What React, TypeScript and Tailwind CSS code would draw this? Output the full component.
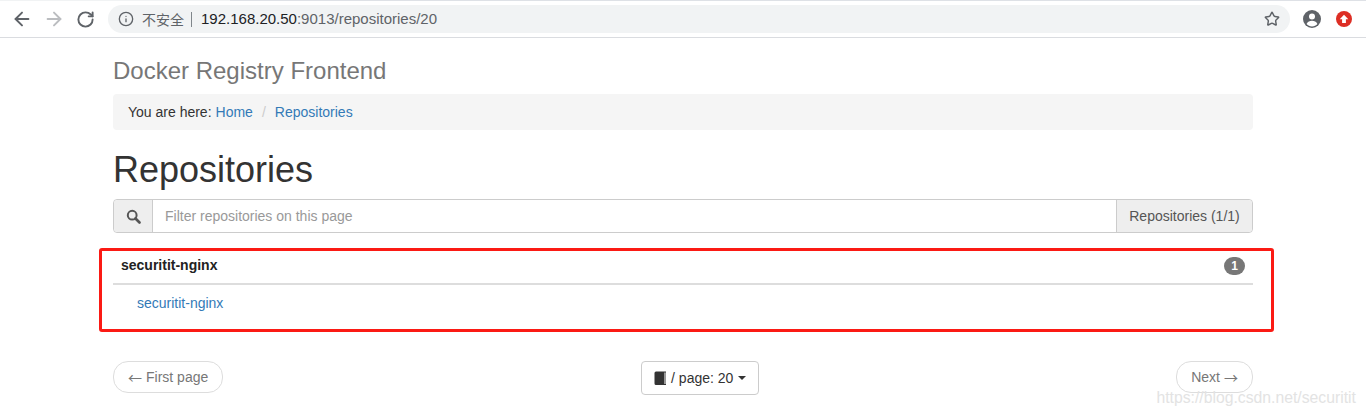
import { ArrowLeft, ArrowRight, RotateCw, Info, Star } from "lucide-react"

function Toolbar() {
  return (
    <div className="h-[38px] flex flex-col border-b border-[#dadce0] bg-white">
      <div className="h-px flex shrink-0">
        <div className="w-[230px] bg-[#f1f3f4]" />
        <div className="flex-1 bg-[#dee1e6]" />
      </div>
      <div className="flex-1 flex items-center pl-[11px]">
        <ArrowLeft size={22} strokeWidth={2.1} className="text-[#5f6368]" />
        <ArrowRight size={22} strokeWidth={2.1} className="ml-[10px] text-[#bbbdc0]" />
        <RotateCw size={19} strokeWidth={2.4} className="ml-[11px] text-[#5f6368]" />
        <div className="ml-[13px] h-[28px] w-[1182px] rounded-full bg-[#f1f3f4] flex items-center pl-[10px] pr-[10px]">
          <Info size={16} strokeWidth={2} className="text-[#5f6368]" />
          <span className="ml-2 text-[14px] text-[#5f6368] font-['Noto_Sans_CJK_SC',sans-serif] leading-none">不安全</span>
          <span className="ml-[7px] w-px h-[15px] bg-[#80868b]" />
          <span className="ml-[9px] text-[15px] text-[#202124]">192.168.20.50</span>
          <span className="text-[15px] text-[#5f6368]">:9013/repositories/20</span>
          <Star size={16} strokeWidth={2.2} className="ml-auto text-[#5f6368]" />
        </div>
        <div className="ml-[13px] w-[18px] h-[18px] rounded-full bg-[#5f6368] flex flex-col items-center justify-center overflow-hidden">
          <svg width="18" height="18" viewBox="0 0 18 18">
            <circle cx="9" cy="6.5" r="3" fill="#fff" />
            <path d="M3.6 14c.9-2.1 3.2-3.2 5.4-3.2s4.500 1.100 5.400 3.200c-1.300 1.500-3.300 2.400-5.400 2.400s-4.100-.9-5.400-2.400z" fill="#fff" />
          </svg>
        </div>
        <div className="ml-[15px] w-4 h-4 rounded-full bg-[#dd2e24] flex items-center justify-center">
          <svg width="10" height="10" viewBox="0 0 10 10">
            <path d="M5 .8 9.300 5.200H6.900V9H3.100V5.200H.7z" fill="#fff" />
          </svg>
        </div>
      </div>
    </div>
  )
}

function PagerButton({ children }: { children: React.ReactNode }) {
  return (
    <a className="h-8 px-[14px] flex items-center rounded-[15px] border border-[#dddddd] bg-white text-[14px] text-[#777777]">
      {children}
    </a>
  )
}

export default function App() {
  return (
    <div className="h-[416px] overflow-hidden bg-white font-['Liberation_Sans',Arial,sans-serif] text-[14px] text-[#333333] relative">
      <Toolbar />
      <div className="w-[1140px] ml-[113px]">
        <div className="h-[56px] flex items-end pb-2">
          <span className="text-[24px] leading-[30px] text-[#777777]">Docker Registry Frontend</span>
        </div>
        <div className="h-9 px-[15px] flex items-center rounded bg-[#f5f5f5]">
          <span>You are here:</span>
          <a className="ml-1 text-[#337ab7]">Home</a>
          <span className="ml-[9px] text-[#cccccc]">/</span>
          <a className="ml-[9px] text-[#337ab7]">Repositories</a>
        </div>
        <h1 className="mt-5 text-[36px] leading-10 text-[#333333]">Repositories</h1>
        <div className="mt-[9px] h-[34px] flex border border-[#cccccc] rounded">
          <div className="w-[39px] shrink-0 flex items-center justify-center bg-[#eeeeee] border-r border-[#cccccc] rounded-l">
            <svg width="15" height="15" viewBox="0 0 15 15" fill="none" stroke="#555555">
              <circle cx="6.200" cy="6.200" r="4.400" strokeWidth="2" />
              <path d="M9.500 9.500 13.500 13.500" strokeWidth="2.600" strokeLinecap="round" />
            </svg>
          </div>
          <div className="flex-1 px-3 flex items-center text-[#999999]">Filter repositories on this page</div>
          <div className="w-[136px] shrink-0 flex items-center justify-center bg-[#eeeeee] border-l border-[#cccccc] text-[#555555] rounded-r">
            Repositories (1/1)
          </div>
        </div>

        <div className="mt-[15px] -mx-[14px] w-[1175px] h-[84px] border-[3px] border-[#fb1a14] rounded-[3px] pl-[11px] pr-[18px] flex flex-col">
          <div className="h-[34px] flex items-center justify-between border-b-2 border-[#dddddd] pl-2 pr-2 pb-[3px]">
            <strong className="text-[#222222] text-[14px] font-bold">securitit-nginx</strong>
            <span className="w-[21px] h-[18px] rounded-full bg-[#777777] text-white text-[12px] font-bold flex items-center justify-center">1</span>
          </div>
          <a className="ml-6 mt-[8px] text-[#337ab7]">securitit-nginx</a>
        </div>

        <div className="mt-[29px] flex items-start justify-between">
          <PagerButton>
            <span className="font-['Noto_Sans_CJK_SC',sans-serif] leading-none">←</span>
            <span className="ml-1">First page</span>
          </PagerButton>
          <div className="h-[34px] w-[118px] flex items-center justify-center gap-1 border border-[#cccccc] rounded text-[#333333]">
            <svg width="14" height="15" viewBox="0 0 14 15">
              <path d="M3 .5h10v13.500H3a1.500 1.500 0 0 1-1.500-1.500V2A1.500 1.500 0 0 1 3 .5z" fill="#333333" />
              <path d="M11.500 1.500h1v11.500h-1z" fill="#ffffff" />
            </svg>
            <span>/ page: 20</span>
            <span className="ml-px w-0 h-0 border-x-4 border-x-transparent border-t-4 border-t-[#333333]" />
          </div>
          <PagerButton>
            <span>Next</span>
            <span className="ml-1 font-['Noto_Sans_CJK_SC',sans-serif] leading-none">→</span>
          </PagerButton>
        </div>
      </div>
      {/* csdn watermark */}
      <div className="absolute right-[10px] top-[386px] text-[15.75px] text-[#e3e3e3]">https://blog.csdn.net/securitit</div>
    </div>
  )
}
